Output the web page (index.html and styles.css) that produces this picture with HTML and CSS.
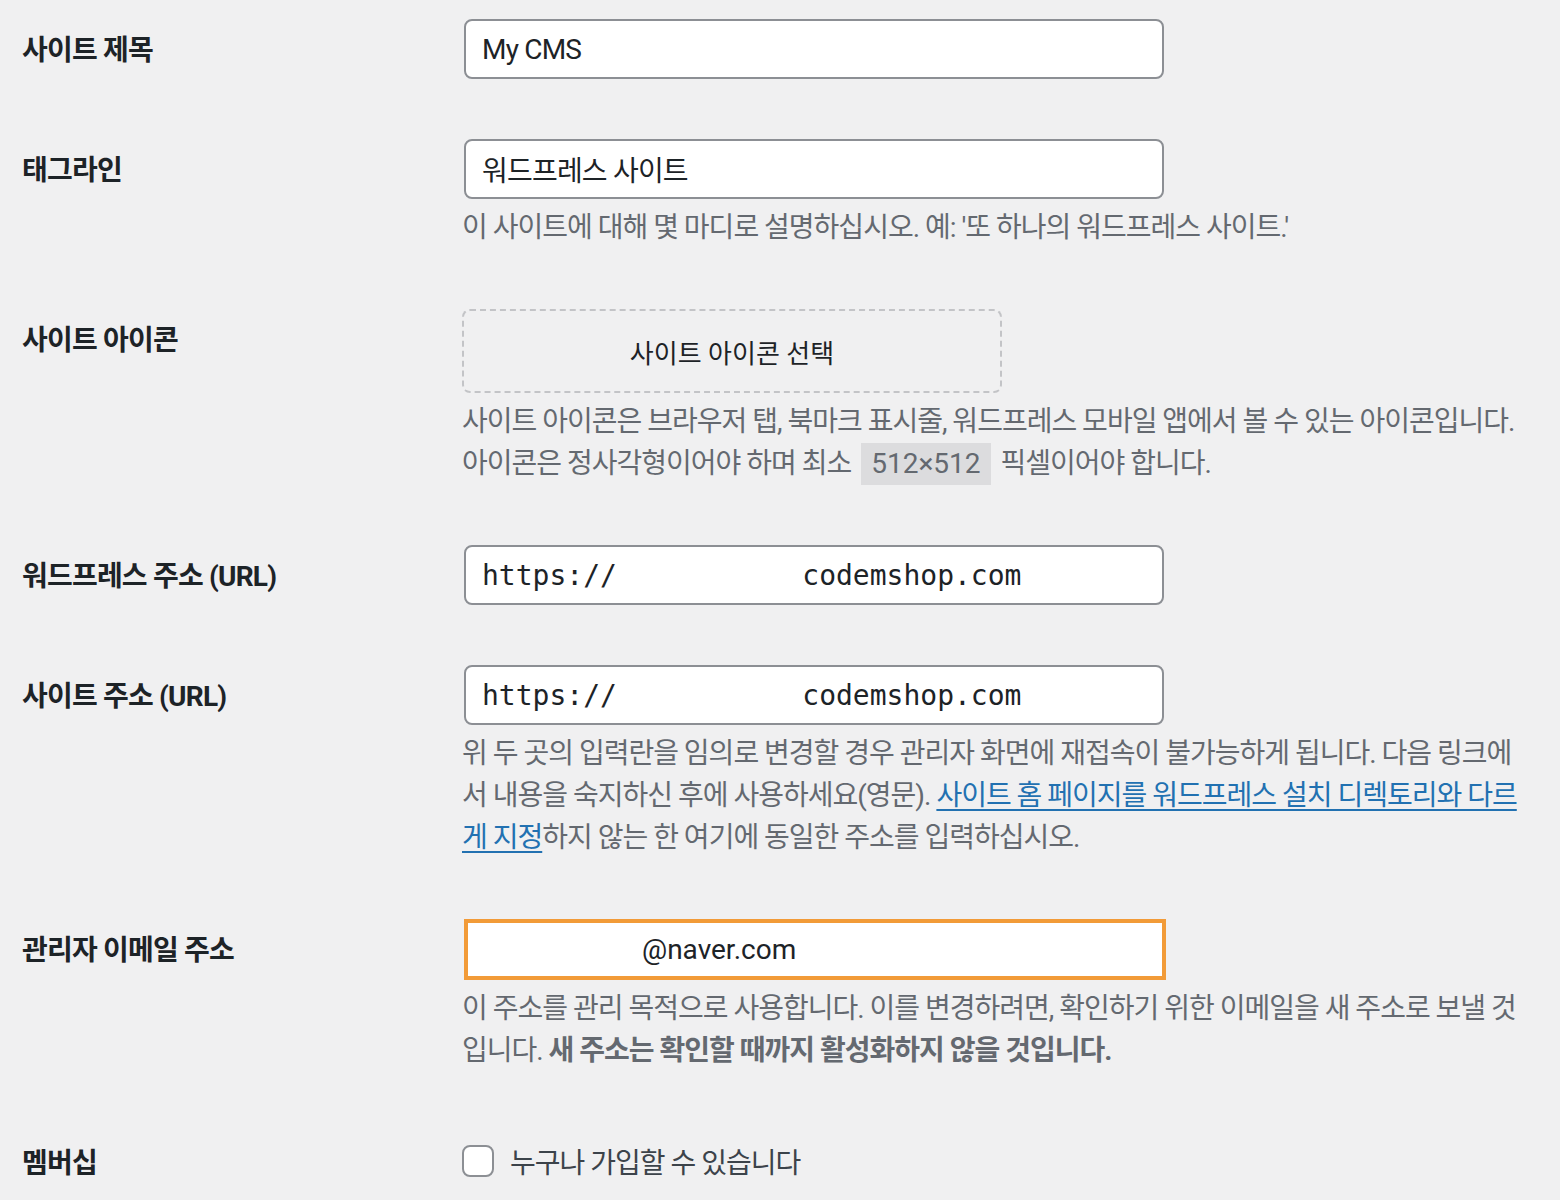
FILE: index.html
```html
<!DOCTYPE html>
<html lang="ko">
<head>
<meta charset="utf-8">
<title>일반 설정</title>
<link rel="stylesheet" href="styles.css">
</head>
<body>
<div class="form-table">
  <div class="row">
    <div class="th"><label>사이트 제목</label></div>
    <div class="td"><input class="text-input" type="text" value="My CMS"></div>
  </div>
  <div class="row">
    <div class="th"><label>태그라인</label></div>
    <div class="td">
      <input class="text-input" type="text" value="워드프레스 사이트">
      <p class="description">이 사이트에 대해 몇 마디로 설명하십시오. 예: '또 하나의 워드프레스 사이트.'</p>
    </div>
  </div>
  <div class="row">
    <div class="th"><label>사이트 아이콘</label></div>
    <div class="td">
      <button class="icon-button" type="button">사이트 아이콘 선택</button>
      <p class="description">사이트 아이콘은 브라우저 탭, 북마크 표시줄, 워드프레스 모바일 앱에서 볼 수 있는 아이콘입니다. 아이콘은 정사각형이어야 하며 최소 <code class="code">512×512</code> 픽셀이어야 합니다.</p>
    </div>
  </div>
  <div class="row">
    <div class="th"><label>워드프레스 주소 (URL)</label></div>
    <div class="td"><input class="text-input mono" type="text" value="https://           codemshop.com"></div>
  </div>
  <div class="row">
    <div class="th"><label>사이트 주소 (URL)</label></div>
    <div class="td">
      <input class="text-input mono" type="text" value="https://           codemshop.com">
      <p class="description">위 두 곳의 입력란을 임의로 변경할 경우 관리자 화면에 재접속이 불가능하게 됩니다. 다음 링크에서 내용을 숙지하신 후에 사용하세요(영문). <a class="link" href="#">사이트 홈 페이지를 워드프레스 설치 디렉토리와 다르게 지정</a>하지 않는 한 여기에 동일한 주소를 입력하십시오.</p>
    </div>
  </div>
  <div class="row">
    <div class="th"><label>관리자 이메일 주소</label></div>
    <div class="td">
      <input class="text-input email" type="text" value="@naver.com">
      <p class="description">이 주소를 관리 목적으로 사용합니다. 이를 변경하려면, 확인하기 위한 이메일을 새 주소로 보낼 것입니다. <strong>새 주소는 확인할 때까지 활성화하지 않을 것입니다.</strong></p>
    </div>
  </div>
  <div class="row">
    <div class="th th-check"><label>멤버십</label></div>
    <div class="td">
      <label class="check-label"><span class="checkbox"></span><span>누구나 가입할 수 있습니다</span></label>
    </div>
  </div>
</div>
</body>
</html>
```
FILE: styles.css
```css
html, body {
  margin: 0;
  padding: 0;
  background: #f0f0f1;
}
body {
  font-family: Roboto, "Noto Sans CJK KR", sans-serif;
  color: #1d2327;
  font-size: 28px;
  overflow: hidden;
}
.form-table {
  margin-top: -11px;
  padding-left: 22px;
}
.row {
  display: flex;
}
.th {
  width: 400px;
  padding: 44px 20px 35px 0;
  flex: none;
}
.th label {
  display: block;
  font-weight: 700;
  font-size: 28px;
  line-height: 36px;
  color: #1d2327;
  letter-spacing: -0.8px;
}
.td {
  padding: 30px 20px;
  width: 1060px;
  flex: none;
}
.text-input {
  box-sizing: border-box;
  display: block;
  width: 700px;
  height: 60px;
  margin: 0 2px;
  padding: 0 16px;
  border: 2px solid #8c8f94;
  border-radius: 8px;
  background: #fff;
  font-family: Roboto, "Noto Sans CJK KR", sans-serif;
  font-size: 28px;
  letter-spacing: -0.8px;
  color: #1d2327;
  outline: none;
}
.mono {
  font-family: "DejaVu Sans Mono", monospace;
  font-size: 28px;
  letter-spacing: 0;
}
.email {
  width: 702px;
  height: 61px;
  border: 4px solid #f29b38;
  border-radius: 0;
  padding-left: 14px;
  text-indent: 160px;
  letter-spacing: 0;
}
.description {
  margin: 8px 0 0;
  font-size: 28px;
  line-height: 42px;
  letter-spacing: -1px;
  color: #646970;
}
.description strong {
  font-weight: 700;
}
.link {
  color: #2271b1;
  text-decoration: underline;
  text-underline-offset: 4px;
}
.code {
  display: inline-block;
  font-family: Roboto, "Noto Sans CJK KR", sans-serif;
  background: #dcdcde;
  padding: 0 10px;
  margin: 0 4px;
  line-height: 42px;
  letter-spacing: 0;
  color: #646970;
}
.icon-button {
  box-sizing: border-box;
  display: block;
  width: 540px;
  height: 84px;
  border: 2px dashed #c3c4c7;
  border-radius: 8px;
  background: transparent;
  font-family: Roboto, "Noto Sans CJK KR", sans-serif;
  font-size: 26px;
  color: #1d2327;
  padding: 0;
  margin: 0;
}
.check-label {
  display: flex;
  align-items: center;
  height: 58px;
  font-size: 28px;
  letter-spacing: -1px;
  color: #3c434a;
}
.checkbox {
  box-sizing: border-box;
  width: 32px;
  height: 32px;
  border: 2px solid #8c8f94;
  border-radius: 8px;
  background: #fff;
  margin-right: 16px;
  flex: none;
}
```
